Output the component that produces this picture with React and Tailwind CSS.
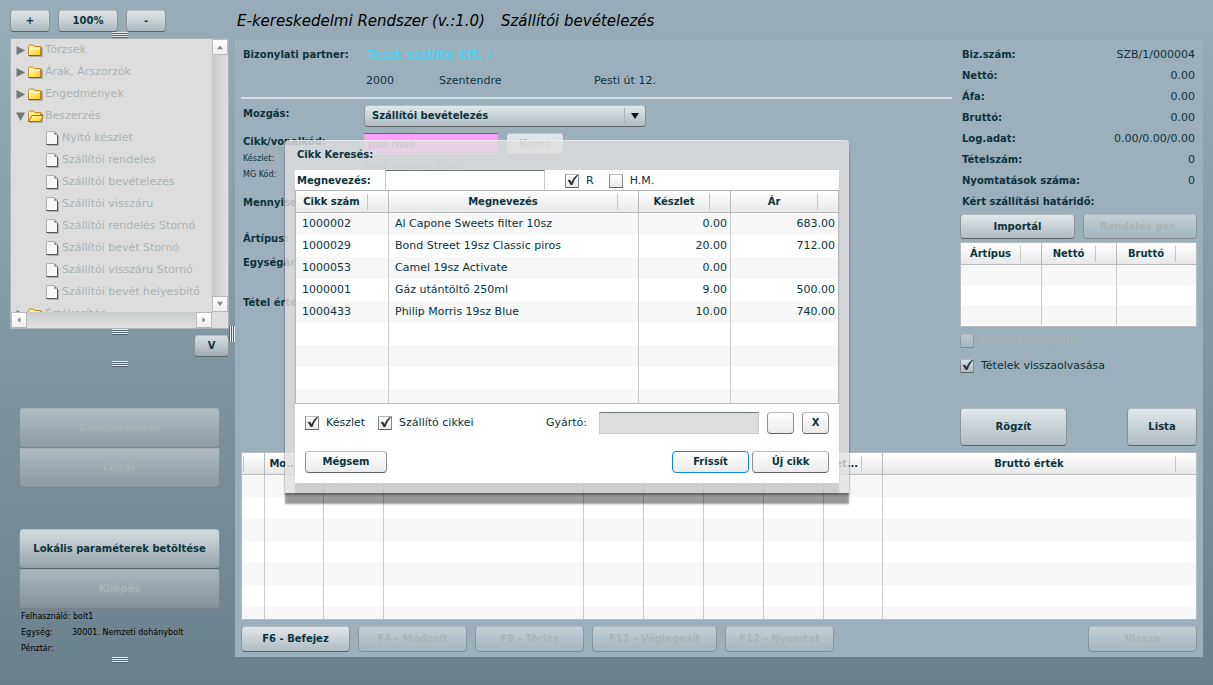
import { useState } from "react";
import clsx from "clsx";

const TREE = [
  { label: "Törzsek", type: "folder" },
  { label: "Árak, Árszorzók", type: "folder" },
  { label: "Engedmények", type: "folder" },
  { label: "Beszerzés", type: "open" },
  { label: "Nyitó készlet", type: "leaf" },
  { label: "Szállítói rendelés", type: "leaf" },
  { label: "Szállítói bevételezés", type: "leaf" },
  { label: "Szállítói visszáru", type: "leaf" },
  { label: "Szállítói rendelés Stornó", type: "leaf" },
  { label: "Szállítói bevét Stornó", type: "leaf" },
  { label: "Szállítói visszáru Stornó", type: "leaf" },
  { label: "Szállítói bevét helyesbítő", type: "leaf" },
  { label: "Értékesítés", type: "folder" },
];

const TOTALS = [
  ["Biz.szám:", "SZB/1/000004"],
  ["Nettó:", "0.00"],
  ["Áfa:", "0.00"],
  ["Bruttó:", "0.00"],
  ["Log.adat:", "0.00/0.00/0.00"],
  ["Tételszám:", "0"],
  ["Nyomtatások száma:", "0"],
  ["Kért szállítási határidő:", ""],
];

const PRODUCTS = [
  ["1000002", "Al Capone Sweets filter 10sz", "0.00", "683.00"],
  ["1000029", "Bond Street 19sz Classic piros", "20.00", "712.00"],
  ["1000053", "Camel 19sz Activate", "0.00", ""],
  ["1000001", "Gáz utántöltő 250ml", "9.00", "500.00"],
  ["1000433", "Philip Morris 19sz Blue", "10.00", "740.00"],
];

function Button({ children, className, disabled, focused, ...props }) {
  return (
    <button
      type="button"
      disabled={disabled}
      className={clsx(
        "flex shrink-0 items-center justify-center rounded border bg-linear-to-b text-[10px] leading-4 font-bold whitespace-nowrap",
        focused && "border-[#0c8ae0] from-white to-[#ebebeb]",
        !focused && !disabled && "border-[#8c9194] border-t-[#b7babc] border-b-[#5c6265] from-white/70 to-[#ccc]/40",
        disabled && "border-[#6f7c82]/60 border-t-[#b7babc]/60 border-b-[#5c6265]/60 from-white/40 to-[#ccc]/20 text-[#aab3b3]",
        className
      )}
      {...props}
    >
      {children}
    </button>
  );
}

function CheckBox({ label, disabled, defaultChecked = false }) {
  const [checked, setChecked] = useState(defaultChecked);
  return (
    <label className={clsx("flex items-center gap-[7px] text-[11px] leading-4", disabled && "text-[#aab3b3]")}>
      <span className="relative block size-[14px]">
        <input
          type="checkbox"
          checked={checked}
          disabled={disabled}
          onChange={(e) => setChecked(e.target.checked)}
          className="block size-[14px] appearance-none border border-[#85898c] border-t-[#b7babc] border-b-[#5c6265] bg-linear-to-b from-white/60 to-[#ccc]/40 disabled:opacity-50"
        />
        {checked && (
          <svg viewBox="0 0 14 14" className="pointer-events-none absolute inset-0 size-[14px]">
            <path d="M2.600 6 5 5.700l1.500 2.200Q8.400 3.600 12 .8l1 .5Q9.600 5 7.400 11H5.700Z" fill="#2b333c" />
          </svg>
        )}
      </span>
      {label}
    </label>
  );
}

function Grip({ vertical }) {
  return (
    <div
      className={clsx(
        "shrink-0",
        vertical
          ? "h-4 w-[6px] bg-[repeating-linear-gradient(90deg,#52636c_0_1px,#e9eef0_1px_2px)]"
          : "mx-auto h-[6px] w-4 bg-[repeating-linear-gradient(180deg,#e9eef0_0_1px,#52636c_1px_2px)]"
      )}
    />
  );
}

function FolderIcon({ open }) {
  return (
    <svg viewBox="0 0 16 13" className="h-[13px] w-4 shrink-0">
      <defs>
        <linearGradient id="folder" x1="0" y1="0" x2="1" y2="1">
          <stop offset="0" stopColor="#fff6a8" />
          <stop offset="0.500" stopColor="#ffe96a" />
          <stop offset="1" stopColor="#fcc404" />
        </linearGradient>
      </defs>
      <path d="M1.500 12.500h13V3.500" fill="none" stroke="#000" strokeOpacity="0.200" />
      <path d="M.5 11.500V2.500l1-1.500h4l1 1.500h6.500v9Z" fill="url(#folder)" stroke="#c08d2c" />
      <path d="M.5 11.500h12.500v-8" fill="none" stroke="#8a5a10" />
      {!open && <path d="M1.500 10V4.500h10.500" fill="none" stroke="#fffbd0" />}
      {open && <path d="M.8 11.500 3.800 5.500h11.200l-2 6Z" fill="url(#folder)" stroke="#a36f16" />}
    </svg>
  );
}

function FileIcon() {
  return (
    <svg viewBox="0 0 13 15" className="h-[15px] w-[13px] shrink-0">
      <path d="M1.500 14.500h11V5" fill="none" stroke="#000" strokeOpacity="0.200" />
      <path d="M.5 13.500V.5h8l3 3v10Z" fill="#f6f6f6" stroke="#b0b0b0" />
      <path d="M.5 13.500h11V4" fill="none" stroke="#555" />
      <path d="M8.500 1v2.500H11Z" fill="#888" stroke="#888" strokeWidth="0.500" />
    </svg>
  );
}

function Arrow({ dir, className }) {
  const paths = {
    up: "M4 2 8 7H0Z",
    down: "M0 1h8L4 7Z",
    left: "M2 4 6 0v8Z",
    right: "M6 4 2 0v8Z",
  };
  return (
    <svg viewBox="0 0 8 8" className={clsx("shrink-0", className)}>
      <path d={paths[dir]} fill="currentColor" />
    </svg>
  );
}

function TreeRow({ label, type }) {
  if (type === "leaf") {
    return (
      <li className="flex h-[22px] items-center gap-[3px] pl-[35px] whitespace-nowrap">
        <FileIcon />
        {label}
      </li>
    );
  }
  return (
    <li className="flex h-[22px] items-center pl-[5px] whitespace-nowrap">
      <svg viewBox="0 0 9 9" className="mr-[3px] size-[9px] shrink-0">
        <path d={type === "open" ? "M0 .5h9L4.500 9Z" : "M.5 0 9 4.500.5 9Z"} fill="#6f7777" />
      </svg>
      <FolderIcon open={type === "open"} />
      <span className="pl-px">{label}</span>
    </li>
  );
}

function ScrollButton({ dir }) {
  return (
    <button
      type="button"
      aria-label={dir}
      className="flex size-4 items-center justify-center border border-[#b7babc] bg-linear-to-b from-white to-[#eee] text-[#8a8a8a]"
    >
      <Arrow dir={dir} className="size-[6px]" />
    </button>
  );
}

function Tree() {
  return (
    <div className="grid grid-cols-[1fr_16px] border border-[#aab3b8] bg-[#ddd]">
      <ul className="h-[273px] overflow-hidden text-[11px] text-[#aab3b3]">
        {TREE.map((item) => (
          <TreeRow key={item.label} {...item} />
        ))}
      </ul>
      <div className="flex flex-col justify-between bg-linear-to-r from-[#c9cccc] to-[#e0e0e0]">
        <ScrollButton dir="up" />
        <ScrollButton dir="down" />
      </div>
      <div className="flex justify-between bg-linear-to-b from-[#c9cccc] to-[#e0e0e0]">
        <ScrollButton dir="left" />
        <ScrollButton dir="right" />
      </div>
    </div>
  );
}

function DataGrid({ columns, rows, tall, className }) {
  return (
    <div className={clsx("overflow-hidden border border-[#b7babc] bg-white", className)}>
      <table className="w-full table-fixed border-separate border-spacing-0">
        <thead>
          <tr className="h-[22px]">
            {columns.map((col, i) => (
              <th
                key={i}
                className={clsx(
                  "border-b border-[#b7babc] bg-linear-to-b from-white to-[#e8e8e8] p-0 text-[10px] leading-4",
                  i < columns.length - 1 && "border-r",
                  col.width
                )}
              >
                <div className="mr-5 h-4 overflow-hidden border-r border-[#c4c6c8] text-center whitespace-nowrap">
                  {col.label}
                </div>
              </th>
            ))}
          </tr>
        </thead>
        <tbody>
          {rows.map((row, r) => (
            <tr key={r} className={clsx("odd:bg-[#f7f7f7]", tall ? "h-[22px]" : "h-5")}>
              {columns.map((col, c) => (
                <td
                  key={c}
                  className={clsx(
                    "overflow-hidden p-0 text-[11px] leading-4 whitespace-nowrap",
                    c < columns.length - 1 && "border-r border-[#c8cacb]",
                    col.right ? "pr-[3px] text-right" : "pl-[6px]"
                  )}
                >
                  {row[c]}
                </td>
              ))}
            </tr>
          ))}
        </tbody>
      </table>
    </div>
  );
}

const PRODUCT_COLUMNS = [
  { label: "Cikk szám", width: "w-[93px]" },
  { label: "Megnevezés" },
  { label: "Készlet", width: "w-[92px]", right: true },
  { label: "Ár", width: "w-[107px]", right: true },
];

const PRICE_COLUMNS = [
  { label: "Ártípus", width: "w-[81px]" },
  { label: "Nettó", width: "w-[75px]" },
  { label: "Bruttó" },
];

const ITEM_COLUMNS = [
  { label: "", width: "w-[23px]" },
  { label: "Mo...", width: "w-[59px]" },
  { label: "", width: "w-[60px]" },
  { label: "", width: "w-[200px]" },
  { label: "", width: "w-[60px]" },
  { label: "", width: "w-[60px]" },
  { label: "", width: "w-[60px]" },
  { label: "", width: "w-[60px]" },
  { label: "Net...", width: "w-[59px]" },
  { label: "Bruttó érték" },
];

function Sidebar() {
  return (
    <aside className="flex w-[219px] shrink-0 flex-col pt-[10px]">
      <div className="flex gap-2">
        <Button className="h-[22px] w-10">+</Button>
        <Button className="h-[22px] w-[60px]">100%</Button>
        <Button className="h-[22px] w-10">-</Button>
      </div>
      <Grip />
      <Tree />
      <Grip />
      <Button className="h-[22px] w-[35px] self-end">V</Button>
      <div className="pt-1">
        <Grip />
      </div>
      <nav className="mx-[9px] mt-[41px] flex flex-col">
        <Button disabled className="h-10 rounded-b-none">
          Kereskedelem
        </Button>
        <Button disabled className="h-10 rounded-t-none">
          Leltár
        </Button>
        <Button className="mt-[41px] h-10">Lokális paraméterek betöltése</Button>
        <Button disabled className="h-10">
          Kilépés
        </Button>
      </nav>
      <div className="pl-[11px] text-[8px] leading-4 text-black">
        <p>Felhasználó: bolt1</p>
        <p className="flex">
          <span className="w-[51px]">Egység:</span>30001. Nemzeti dohánybolt
        </p>
        <p>Pénztár:</p>
      </div>
      <Grip />
    </aside>
  );
}

function DocumentForm() {
  return (
    <div className="min-w-0 flex-1 text-[10px] leading-4 font-bold">
      <div className="grid grid-cols-[124px_1fr] pt-[7px] pl-[2px]">
        <span>Bizonylati partner:</span>
        <span className="text-[12px] text-[#4fd0f2]">Teszt szállító Kft. /</span>
      </div>
      <div className="flex h-[34px] items-center pt-[2px] pl-[125px] text-[11px] font-normal">
        <span className="w-[73px]">2000</span>
        <span className="w-[155px]">Szentendre</span>
        <span>Pesti út 12.</span>
      </div>
      <hr className="h-[2px] border-0 bg-[#d6dde1]" />

      <div className="mt-[6px] grid grid-cols-[121px_1fr] pl-[2px]">
        <label htmlFor="mozgas" className="pt-px">
          Mozgás:
        </label>
        <div className="relative h-[22px] w-[282px]">
          <select
            id="mozgas"
            className="block h-[22px] w-full appearance-none rounded border border-[#8c9194] border-t-[#b7babc] border-b-[#5c6265] bg-linear-to-b from-white/70 to-[#ccc]/40 pl-[7px] font-bold"
          >
            <option>Szállítói bevételezés</option>
          </select>
          <span className="pointer-events-none absolute inset-y-0 right-0 my-[3px] flex w-[22px] items-center justify-center border-l border-[#aab3b8] pr-[2px] text-[#111]">
            <Arrow dir="down" className="size-2" />
          </span>
        </div>
        <label htmlFor="cikk" className="pt-[7px]">
          Cikk/vonalkód:
        </label>
        <div className="flex gap-2 pt-[6px]">
          <input
            id="cikk"
            disabled
            defaultValue="pall mall"
            className="h-[22px] w-[134px] border border-[#c4b7c8] border-t-[#6f5f73] bg-[#fa9ffa] pl-[3px] text-[11px] font-normal text-[#5f6f70]"
          />
          <Button disabled className="h-[22px] w-[58px] from-white/70 to-white/50 text-[#7d8c8f]">
            Keres
          </Button>
        </div>
      </div>

      <div className="grid grid-cols-[122px_1fr] pl-[2px] text-[8px] leading-4 font-normal">
        <span className="-mt-1">Készlet:</span>
        <span className="row-span-2 pt-1 text-[#6d7b80]">V.kód: 4000862410104</span>
        <span>MG Kód:</span>
      </div>
      <div className="pl-[2px]">
        <p className="mt-3">Mennyiség:</p>
        <p className="mt-5">Ártípus:</p>
        <p className="mt-2">Egységár:</p>
        <p className="mt-6">Tétel érték:</p>
      </div>
    </div>
  );
}

function DocumentSummary() {
  return (
    <div className="w-[237px] shrink-0 pt-1">
      <dl className="leading-4">
        {TOTALS.map(([label, value]) => (
          <div key={label} className="flex h-[21px] items-center justify-between px-[2px]">
            <dt className="text-[10px] font-bold whitespace-nowrap">{label}</dt>
            <dd className="text-[11px]">{value}</dd>
          </div>
        ))}
      </dl>
      <div className="mt-[2px] flex justify-between">
        <Button className="h-[25px] w-[115px]">Importál</Button>
        <Button disabled className="h-[25px] w-[114px]">
          Rendelés gen.
        </Button>
      </div>
      <DataGrid className="mt-[3px] h-[85px]" columns={PRICE_COLUMNS} rows={[[], [], []]} />
      <div className="mt-[6px] flex flex-col gap-[9px]">
        <CheckBox label="Eladási ár rögzítés" disabled />
        <CheckBox label="Tételek visszaolvasása" defaultChecked />
      </div>
      <div className="mt-[34px] flex justify-between">
        <Button className="h-[38px] w-[107px]">Rögzít</Button>
        <Button className="h-[38px] w-[70px]">Lista</Button>
      </div>
    </div>
  );
}

function SearchDialog() {
  return (
    <div
      role="dialog"
      aria-label="Cikk Keresés"
      className="absolute top-[100px] left-[50px] w-[564px] rounded-t border-t border-white/40 bg-[#e0e0e0]/80 px-[10px] pb-[10px] shadow-[0_11px_2px_rgba(0,0,0,0.4),0_2px_2px_rgba(0,0,0,0.3)]"
    >
      <h2 className="h-[29px] pt-[6px] pl-[2px] text-[10px] leading-4 font-bold">Cikk Keresés:</h2>
      <div className="bg-white shadow-[0_11px_2px_rgba(0,0,0,0.1)]">
        <div className="flex h-5 items-center">
          <label htmlFor="megnevezes" className="w-[90px] pl-[2px] text-[10px] font-bold">
            Megnevezés:
          </label>
          <input
            id="megnevezes"
            className="h-5 w-[160px] border-x border-t border-[#c8cacb] border-t-[#6f7777] bg-white px-1 text-[11px] outline-none"
          />
          <div className="flex gap-[15px] pt-[2px] pl-5">
            <CheckBox label="R" defaultChecked />
            <CheckBox label="H.M." />
          </div>
        </div>
        <DataGrid
          tall
          className="h-[214px]"
          columns={PRODUCT_COLUMNS}
          rows={[...PRODUCTS, [], [], [], []]}
        />
        <div className="flex items-center px-[10px] pt-2">
          <CheckBox label="Készlet" defaultChecked />
          <div className="pl-[13px]">
            <CheckBox label="Szállító cikkei" defaultChecked />
          </div>
          <label htmlFor="gyarto" className="ml-auto pr-3 text-[11px]">
            Gyártó:
          </label>
          <input
            id="gyarto"
            disabled
            className="h-[22px] w-[160px] border border-[#c8cacb] border-t-[#6f7777] bg-[#ddd] px-1 text-[11px]"
          />
          <Button className="ml-2 h-[22px] w-[27px]" aria-label="Gyártó keresése" />
          <Button className="ml-2 h-[22px] w-[27px]">X</Button>
        </div>
        <div className="flex gap-[3px] px-[10px] pt-[17px] pb-[10px]">
          <Button className="mr-auto h-[22px] w-[82px]">Mégsem</Button>
          <Button focused className="h-[22px] w-[77px]">
            Frissít
          </Button>
          <Button className="h-[22px] w-[77px]">Új cikk</Button>
        </div>
      </div>
    </div>
  );
}

export default function App() {
  return (
    <div className="flex min-h-screen bg-linear-to-b from-[#98adb7] to-[#6a808a] pr-[10px] pl-[10px] font-['Verdana','DejaVu_Sans',sans-serif] text-[#0b333c]">
      <Sidebar />
      <div className="flex items-center pb-[17px]">
        <Grip vertical />
      </div>
      <div className="min-w-0 flex-1 pb-7">
        <h1 className="flex h-10 items-center gap-4 pt-[2px] pl-[2px] text-[15px] text-black italic">
          <span>E-kereskedelmi Rendszer (v.:1.0)</span>
          <span>Szállítói bevételezés</span>
        </h1>
        <main className="relative bg-[#9bb0ba] px-[6px] pb-[5px]">
          <div className="flex gap-2">
            <DocumentForm />
            <DocumentSummary />
          </div>
          <DataGrid
            tall
            className="mt-[6px] h-[168px]"
            columns={ITEM_COLUMNS}
            rows={[[], [], [], [], [], [], []]}
          />
          <div className="mt-[6px] flex gap-2">
            <Button className="h-[26px] w-[109px]">F6 - Befejez</Button>
            <Button disabled className="h-[26px] w-[109px]">
              F4 - Módosít
            </Button>
            <Button disabled className="h-[26px] w-[109px]">
              F8 - Törlés
            </Button>
            <Button disabled className="h-[26px] w-[125px]">
              F11 - Véglegesít
            </Button>
            <Button disabled className="h-[26px] w-[109px]">
              F12 - Nyomtat
            </Button>
            <Button disabled className="ml-auto h-[26px] w-[109px]">
              Vissza
            </Button>
          </div>
          <SearchDialog />
        </main>
      </div>
    </div>
  );
}
